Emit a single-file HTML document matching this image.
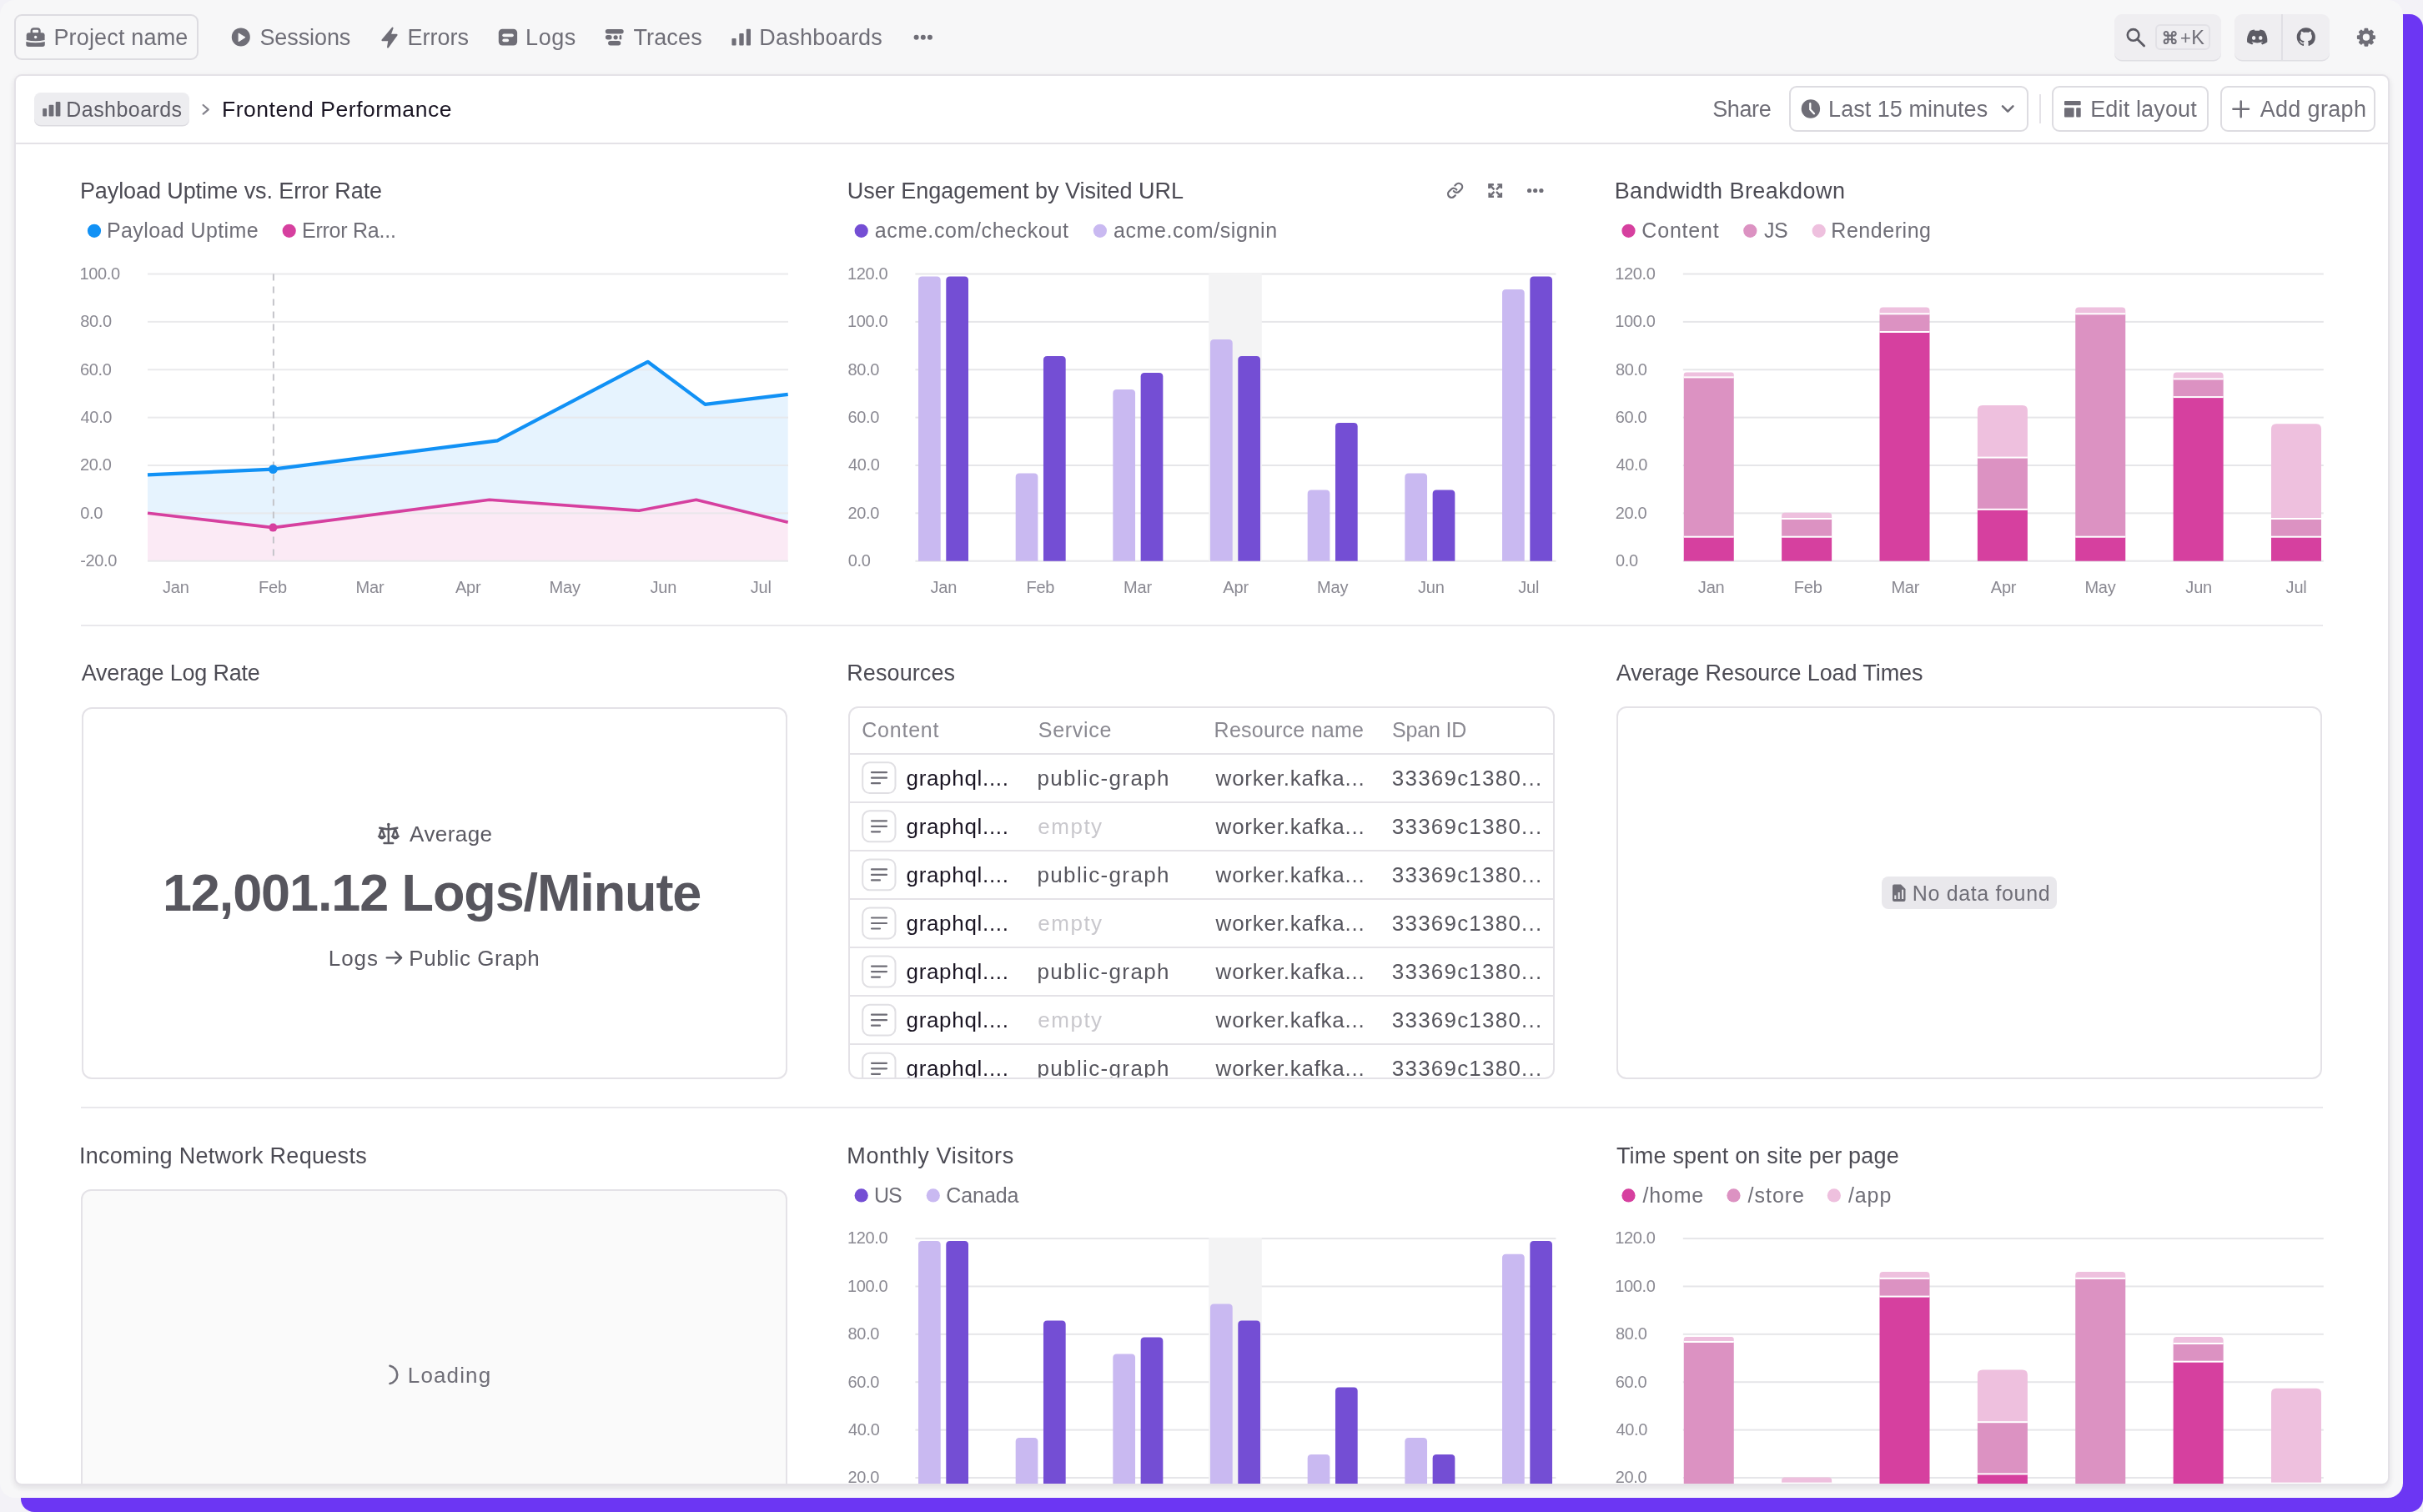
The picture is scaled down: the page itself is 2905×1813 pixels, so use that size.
<!DOCTYPE html>
<html><head><meta charset="utf-8"><title>Frontend Performance</title>
<style>
html,body{margin:0;padding:0}
body{width:2905px;height:1813px;overflow:hidden;position:relative;background:#f3f2f7;font-family:"Liberation Sans",sans-serif}
.t{position:absolute;white-space:nowrap;font-family:"Liberation Sans",sans-serif}
#clip{position:absolute;left:0;top:0;width:2905px;height:1779px;overflow:hidden;will-change:transform}
</style></head><body>
<div style="position:absolute;left:25.00px;top:17.00px;width:2880.00px;height:1796.00px;box-sizing:border-box;background:#6c36f3;border-radius:16px"></div><div style="position:absolute;left:0.00px;top:0.00px;width:2881.00px;height:1796.00px;box-sizing:border-box;background:#f7f7f8;border-radius:18px;overflow:hidden"></div><div style="position:absolute;left:17.30px;top:17.10px;width:221.00px;height:55.30px;box-sizing:border-box;border:2px solid #dddce1;border-radius:9px"></div><div style="position:absolute;left:2535.20px;top:16.70px;width:127.40px;height:55.00px;box-sizing:border-box;background:#efeef1;border-radius:9px;box-shadow:0 1.5px 0 #e0dfe4"></div><div style="position:absolute;left:2583.60px;top:29.30px;width:66.40px;height:30.50px;box-sizing:border-box;border:2px solid #e2e1e6;border-radius:6px"></div><div style="position:absolute;left:2679.00px;top:16.70px;width:113.70px;height:55.00px;box-sizing:border-box;background:#efeef1;border-radius:9px;box-shadow:0 1.5px 0 #e0dfe4"></div><div style="position:absolute;left:2735.00px;top:16.70px;width:2.00px;height:55.00px;box-sizing:border-box;background:#e0dfe4"></div><div style="position:absolute;left:17.30px;top:89.30px;width:2847.70px;height:1691.70px;box-sizing:border-box;background:#fff;border:2px solid #e4e2e7;border-radius:9px;box-shadow:0 4px 6px rgba(40,30,60,0.07),0 1px 10px rgba(40,30,60,0.04)"></div><div style="position:absolute;left:19.00px;top:171.00px;width:2844.00px;height:2.00px;box-sizing:border-box;background:#e4e2e7"></div><div style="position:absolute;left:41.20px;top:111.20px;width:185.60px;height:38.50px;box-sizing:border-box;background:#ededf0;border-radius:8px;box-shadow:0 1.5px 0 #dcdbe0"></div><div style="position:absolute;left:2145.30px;top:103.30px;width:286.70px;height:54.70px;box-sizing:border-box;border:2px solid #dddce1;border-radius:9px"></div><div style="position:absolute;left:2444.80px;top:113.00px;width:2.00px;height:35.20px;box-sizing:border-box;background:#e4e2e7"></div><div style="position:absolute;left:2459.50px;top:103.30px;width:188.70px;height:54.70px;box-sizing:border-box;border:2px solid #dddce1;border-radius:9px"></div><div style="position:absolute;left:2661.50px;top:103.30px;width:186.70px;height:54.70px;box-sizing:border-box;border:2px solid #dddce1;border-radius:9px"></div><div style="position:absolute;left:97.00px;top:749.00px;width:2688.00px;height:2.00px;box-sizing:border-box;background:#e9e8ec"></div><div style="position:absolute;left:97.00px;top:1327.00px;width:2688.00px;height:2.00px;box-sizing:border-box;background:#e9e8ec"></div><div style="position:absolute;left:97.70px;top:847.80px;width:846.30px;height:446.40px;box-sizing:border-box;border:2px solid #e4e2e7;border-radius:12px"></div><div style="position:absolute;left:1017.40px;top:847.20px;width:846.30px;height:446.70px;box-sizing:border-box;border:2px solid #e4e2e7;border-radius:12px"></div><div style="position:absolute;left:1937.80px;top:847.40px;width:845.90px;height:446.50px;box-sizing:border-box;border:2px solid #e4e2e7;border-radius:12px"></div><div style="position:absolute;left:2256.00px;top:1051.40px;width:209.60px;height:38.80px;box-sizing:border-box;background:#e9e8ec;border-radius:8px"></div><div style="position:absolute;left:1019.00px;top:902.60px;width:843.00px;height:2.00px;box-sizing:border-box;background:#e4e2e7"></div><div style="position:absolute;left:1019.00px;top:960.70px;width:843.00px;height:2.00px;box-sizing:border-box;background:#e4e2e7"></div><div style="position:absolute;left:1019.00px;top:1018.80px;width:843.00px;height:2.00px;box-sizing:border-box;background:#e4e2e7"></div><div style="position:absolute;left:1019.00px;top:1076.90px;width:843.00px;height:2.00px;box-sizing:border-box;background:#e4e2e7"></div><div style="position:absolute;left:1019.00px;top:1135.00px;width:843.00px;height:2.00px;box-sizing:border-box;background:#e4e2e7"></div><div style="position:absolute;left:1019.00px;top:1193.10px;width:843.00px;height:2.00px;box-sizing:border-box;background:#e4e2e7"></div><div style="position:absolute;left:1019.00px;top:1251.20px;width:843.00px;height:2.00px;box-sizing:border-box;background:#e4e2e7"></div>
<div id="clip">
<div style="position:absolute;left:97.00px;top:1425.60px;width:847.00px;height:374.40px;box-sizing:border-box;background:#fafafa;border:2px solid #e4e2e7;border-radius:12px"></div>
<svg width="2905" height="1813" viewBox="0 0 2905 1813" style="position:absolute;left:0;top:0"><g transform="translate(31,33.3)" fill="#6f6e77"><rect x="6.8" y="1.2" width="9.6" height="6.5" rx="2.6" fill="none" stroke="#6f6e77" stroke-width="2.6"/><path d="M0.7,9 Q0.7,6 3.7,6 H19.5 Q22.6,6 22.6,9 V14.6 Q11.6,17.2 0.7,14.6 Z"/><path d="M0.3,16.8 Q11.6,19.2 22.8,16.8 V20 Q22.8,22.7 20,22.7 H3.1 Q0.3,22.7 0.3,20 Z"/><circle cx="11.65" cy="11.2" r="1.7" fill="#f7f7f8"/></g><circle cx="288.8" cy="44.4" r="11" fill="#6f6e77"/><path d="M286.2,40.2 L293.6,44.8 L286.2,49.4 Z" fill="#f7f7f8" stroke="#f7f7f8" stroke-width="1.2" stroke-linejoin="round"/><path d="M470.6,33.6 L458.4,48.2 L466.4,48.2 L465,56.6 L475.6,41.8 L467.6,41.8 Z" fill="#6f6e77" stroke="#6f6e77" stroke-width="2" stroke-linejoin="round"/><rect x="597.8" y="34.7" width="22.3" height="19.9" rx="4.5" fill="#6f6e77"/><rect x="602.3" y="40.4" width="13.5" height="3.8" rx="1.9" fill="#f7f7f8"/><rect x="602.3" y="46.6" width="7.8" height="3.6" rx="1.8" fill="#f7f7f8"/><g fill="#6f6e77"><rect x="725.8" y="35" width="21.9" height="5.4" rx="2.7"/><rect x="725.9" y="42.1" width="7.7" height="5.4" rx="2.7"/><circle cx="738.1" cy="44.8" r="2.6"/><rect x="742.6" y="42.1" width="2.6" height="5.4" rx="1.3"/><rect x="729.1" y="49.1" width="15.1" height="5.5" rx="2.75"/></g><g fill="#6f6e77"><rect x="877.4" y="46" width="5.2" height="8.6" rx="1"/><rect x="886.3" y="40" width="5.4" height="14.6" rx="1"/><rect x="894.8" y="34.7" width="5.2" height="19.9" rx="1"/></g><g fill="#6f6e77"><circle cx="1098.6" cy="44.7" r="3"/><circle cx="1106.8" cy="44.7" r="3"/><circle cx="1114.9" cy="44.7" r="3"/></g><circle cx="2557.6" cy="41.9" r="6.8" fill="none" stroke="#5c5b64" stroke-width="2.6"/><path d="M2562.6,47 L2570.6,55" stroke="#5c5b64" stroke-width="2.8" stroke-linecap="round"/><g transform="translate(2592.3,35.6) scale(0.78)"><path d="M15 6v12a3 3 0 1 0 3-3H6a3 3 0 1 0 3 3V6a3 3 0 1 0-3 3h12a3 3 0 1 0-3-3" fill="none" stroke="#6f6e77" stroke-width="2.6" stroke-linecap="round" stroke-linejoin="round"/></g><g transform="translate(2694,35.6) scale(0.1919,0.1847)"><path fill="#5c5b64" d="M107.7,8.07A105.15,105.15,0,0,0,81.47,0a72.06,72.06,0,0,0-3.36,6.83A97.68,97.68,0,0,0,49,6.83,72.37,72.37,0,0,0,45.64,0,105.89,105.89,0,0,0,19.39,8.09C2.79,32.650-1.71,56.6.54,80.21h0A105.730,105.730,0,0,0,32.71,96.36,77.7,77.7,0,0,0,39.6,85.25a68.42,68.42,0,0,1-10.85-5.18c.91-.66,1.8-1.34,2.66-2a75.57,75.57,0,0,0,64.32,0c.87.71,1.76,1.39,2.66,2a68.68,68.68,0,0,1-10.87,5.19,77,77,0,0,0,6.89,11.1A105.25,105.25,0,0,0,126.6,80.22h0C129.24,52.84,122.09,29.11,107.7,8.07ZM42.45,65.69C36.18,65.69,31,60,31,53s5-12.74,11.43-12.74S54,46,53.89,53,48.840,65.69,42.45,65.69Zm42.24,0C78.41,65.69,73.25,60,73.25,53s5-12.74,11.44-12.74S96.23,46,96.12,53,91.08,65.690,84.69,65.69Z"/></g><g transform="translate(2753.7,33.3) scale(1.3875)"><path fill="#5c5b64" d="M8 0C3.58 0 0 3.58 0 8c0 3.54 2.29 6.53 5.47 7.59.4.07.55-.17.55-.38 0-.19-.01-.82-.01-1.49-2.01.37-2.53-.49-2.690-.94-.09-.23-.48-.94-.82-1.13-.28-.15-.68-.52-.01-.53.63-.01 1.08.58 1.23.82.72 1.21 1.87.87 2.33.66.07-.52.28-.87.51-1.07-1.78-.2-3.64-.89-3.64-3.95 0-.87.31-1.59.82-2.15-.08-.2-.36-1.02.08-2.12 0 0 .67-.21 2.2.82.64-.18 1.32-.27 2-.27.68 0 1.36.09 2 .27 1.53-1.04 2.2-.82 2.2-.82.44 1.1.16 1.92.08 2.12.51.56.82 1.27.82 2.15 0 3.07-1.87 3.75-3.65 3.95.29.25.54.73.54 1.48 0 1.07-.01 1.93-.01 2.2 0 .21.15.46.55.38A8.013 8.013 0 0016 8c0-4.42-3.58-8-8-8z"/></g><path d="M2835.34,37.21 L2835.58,34.74 L2838.22,34.74 L2838.46,37.21 L2841.06,38.29 L2842.98,36.71 L2844.84,38.57 L2843.26,40.49 L2844.34,43.09 L2846.81,43.33 L2846.81,45.97 L2844.34,46.21 L2843.26,48.81 L2844.84,50.73 L2842.98,52.59 L2841.06,51.01 L2838.46,52.09 L2838.22,54.56 L2835.58,54.56 L2835.34,52.09 L2832.74,51.01 L2830.82,52.59 L2828.96,50.73 L2830.54,48.81 L2829.46,46.21 L2826.99,45.97 L2826.99,43.33 L2829.46,43.09 L2830.54,40.49 L2828.96,38.57 L2830.82,36.71 L2832.74,38.29 Z" fill="#6f6e77" stroke="#6f6e77" stroke-width="2.2" stroke-linejoin="round"/><circle cx="2836.9" cy="44.65" r="4.1" fill="#f7f7f8"/><g fill="#6f6e77"><rect x="51.2" y="130.1" width="4.9" height="9.4" rx="1"/><rect x="58.6" y="125.7" width="5.8" height="13.8" rx="1"/><rect x="66.7" y="121.9" width="5.7" height="17.6" rx="1"/></g><path d="M243.6,126 L249.8,131.3 L243.6,136.6" fill="none" stroke="#85848d" stroke-width="2.2" stroke-linecap="round" stroke-linejoin="round"/><circle cx="2170.9" cy="130.5" r="11.2" fill="#6f6e77"/><path d="M2170.3,124.2 V131.3 L2175,136.2" fill="none" stroke="#fff" stroke-width="2.3" stroke-linecap="round" stroke-linejoin="round"/><path d="M2401,127.4 L2407.2,133.6 L2413.4,127.4" fill="none" stroke="#6f6e77" stroke-width="2.6" stroke-linecap="round" stroke-linejoin="round"/><g fill="#6f6e77"><rect x="2475" y="121" width="19.7" height="5.3" rx="1"/><rect x="2475" y="129.3" width="11.6" height="11.3" rx="1"/><rect x="2489.2" y="129.3" width="5.5" height="11.3" rx="1"/></g><path d="M2686.7,121.5 V140.2 M2677.4,130.85 H2696" stroke="#6f6e77" stroke-width="2.5" stroke-linecap="round"/><g transform="translate(1734.3,218) scale(0.86)" fill="none" stroke="#6f6e77" stroke-width="2.6" stroke-linecap="round" stroke-linejoin="round"><path d="M10 13a5 5 0 0 0 7.54.54l3-3a5 5 0 0 0-7.07-7.07l-1.72 1.71"/><path d="M14 11a5 5 0 0 0-7.54-.54l-3 3a5 5 0 0 0 7.07 7.07l1.71-1.71"/></g><g stroke="#6f6e77" stroke-width="2.4" fill="none" stroke-linecap="butt"><path d="M1785.6,226 V221.4 H1790.2 M1801.1-0"/><path d="M1785.6,226 V221.4 H1791"/><path d="M1799.9,226 V221.4 H1795.3"/><path d="M1785.6,231.1 V235.7 H1791"/><path d="M1799.9,231.1 V235.7 H1795.3"/><path d="M1786.5,222.3 L1791.5,227.3 M1799,222.3 L1794,227.3 M1786.5,234.8 L1791.5,229.8 M1799,234.8 L1794,229.8"/></g><g fill="#6f6e77"><circle cx="1833.6" cy="228.5" r="2.6"/><circle cx="1840.7" cy="228.5" r="2.6"/><circle cx="1847.9" cy="228.5" r="2.6"/></g><circle cx="113" cy="276.80" r="8.1" fill="#1191f5"/><circle cx="346.7" cy="276.80" r="8.1" fill="#d6409f"/><circle cx="1032.7" cy="276.80" r="8.1" fill="#744ed4"/><circle cx="1318.9" cy="276.80" r="8.1" fill="#c9b9f1"/><circle cx="1952.5" cy="276.80" r="8.1" fill="#d6409f"/><circle cx="2098.3" cy="276.80" r="8.1" fill="#dc92c2"/><circle cx="2180.7" cy="276.80" r="8.1" fill="#eec0de"/><circle cx="1032.7" cy="1433.40" r="8.1" fill="#744ed4"/><circle cx="1118.8" cy="1433.40" r="8.1" fill="#c9b9f1"/><circle cx="1952.5" cy="1433.40" r="8.1" fill="#d6409f"/><circle cx="2078.5" cy="1433.40" r="8.1" fill="#dc92c2"/><circle cx="2198.9" cy="1433.40" r="8.1" fill="#eec0de"/><polygon points="177,569.3 327.4,562.6 596.3,528.3 776.6,433.8 845.4,484.9 944.7,472.8 944.7,626.2 834.7,599.3 766.2,612.3 586.8,599.3 327.4,632.6 177,615.2" fill="#e6f3fe"/><polygon points="177,615.2 327.4,632.6 586.8,599.3 766.2,612.3 834.7,599.3 944.7,626.2 944.7,672.72 177,672.72" fill="#fbeaf5"/><rect x="177" y="327.50" width="768" height="2" fill="#e6e6e9" opacity="0.85"/><rect x="177" y="384.87" width="768" height="2" fill="#e6e6e9" opacity="0.85"/><rect x="177" y="442.24" width="768" height="2" fill="#e6e6e9" opacity="0.85"/><rect x="177" y="499.61" width="768" height="2" fill="#e6e6e9" opacity="0.85"/><rect x="177" y="556.98" width="768" height="2" fill="#e6e6e9" opacity="0.85"/><rect x="177" y="614.35" width="768" height="2" fill="#e6e6e9" opacity="0.85"/><rect x="177" y="671.72" width="768" height="2" fill="#e6e6e9" opacity="0.85"/><line x1="327.9" y1="328.5" x2="327.9" y2="672.72" stroke="#c5c5ca" stroke-width="2" stroke-dasharray="8 7"/><polyline points="177,569.3 327.4,562.6 596.3,528.3 776.6,433.8 845.4,484.9 944.7,472.8" fill="none" stroke="#1191f5" stroke-width="4.2" stroke-linejoin="round"/><polyline points="177,615.2 327.4,632.6 586.8,599.3 766.2,612.3 834.7,599.3 944.7,626.2" fill="none" stroke="#d6409f" stroke-width="3.6" stroke-linejoin="round"/><circle cx="327.4" cy="562.6" r="5.4" fill="#1191f5"/><circle cx="327.4" cy="632.6" r="5" fill="#d6409f"/><rect x="1097.4" y="327.50" width="768" height="2" fill="#e6e6e9"/><rect x="1097.4" y="384.87" width="768" height="2" fill="#e6e6e9"/><rect x="1097.4" y="442.24" width="768" height="2" fill="#e6e6e9"/><rect x="1097.4" y="499.61" width="768" height="2" fill="#e6e6e9"/><rect x="1097.4" y="556.98" width="768" height="2" fill="#e6e6e9"/><rect x="1097.4" y="614.35" width="768" height="2" fill="#e6e6e9"/><rect x="1097.4" y="671.72" width="768" height="2" fill="#e6e6e9"/><rect x="1449.3" y="327.50" width="63.5" height="345.22" fill="#f3f3f4"/><path d="M1101.00,672.72 V336.00 Q1101.00,331.50 1105.50,331.50 H1123.20 Q1127.70,331.50 1127.70,336.00 V672.72 Z" fill="#c9b9f1"/><path d="M1134.30,672.72 V336.00 Q1134.30,331.50 1138.80,331.50 H1156.50 Q1161.00,331.50 1161.00,336.00 V672.72 Z" fill="#744ed4"/><path d="M1217.67,672.72 V572.00 Q1217.67,567.50 1222.17,567.50 H1239.87 Q1244.37,567.50 1244.37,572.00 V672.72 Z" fill="#c9b9f1"/><path d="M1250.97,672.72 V431.50 Q1250.97,427.00 1255.47,427.00 H1273.17 Q1277.67,427.00 1277.67,431.50 V672.72 Z" fill="#744ed4"/><path d="M1334.34,672.72 V471.50 Q1334.34,467.00 1338.84,467.00 H1356.54 Q1361.04,467.00 1361.04,471.50 V672.72 Z" fill="#c9b9f1"/><path d="M1367.64,672.72 V451.50 Q1367.64,447.00 1372.14,447.00 H1389.84 Q1394.34,447.00 1394.34,451.50 V672.72 Z" fill="#744ed4"/><path d="M1451.01,672.72 V411.50 Q1451.01,407.00 1455.51,407.00 H1473.21 Q1477.71,407.00 1477.71,411.50 V672.72 Z" fill="#c9b9f1"/><path d="M1484.31,672.72 V431.50 Q1484.31,427.00 1488.81,427.00 H1506.51 Q1511.01,427.00 1511.01,431.50 V672.72 Z" fill="#744ed4"/><path d="M1567.68,672.72 V592.00 Q1567.68,587.50 1572.18,587.50 H1589.88 Q1594.38,587.50 1594.38,592.00 V672.72 Z" fill="#c9b9f1"/><path d="M1600.98,672.72 V511.40 Q1600.98,506.90 1605.48,506.90 H1623.18 Q1627.68,506.90 1627.68,511.40 V672.72 Z" fill="#744ed4"/><path d="M1684.35,672.72 V572.00 Q1684.35,567.50 1688.85,567.50 H1706.55 Q1711.05,567.50 1711.05,572.00 V672.72 Z" fill="#c9b9f1"/><path d="M1717.65,672.72 V592.00 Q1717.65,587.50 1722.15,587.50 H1739.85 Q1744.35,587.50 1744.35,592.00 V672.72 Z" fill="#744ed4"/><path d="M1801.02,672.72 V351.60 Q1801.02,347.10 1805.52,347.10 H1823.22 Q1827.72,347.10 1827.72,351.60 V672.72 Z" fill="#c9b9f1"/><path d="M1834.32,672.72 V336.00 Q1834.32,331.50 1838.82,331.50 H1856.52 Q1861.02,331.50 1861.02,336.00 V672.72 Z" fill="#744ed4"/><rect x="2017.8" y="327.50" width="768" height="2" fill="#e6e6e9"/><rect x="2017.8" y="384.87" width="768" height="2" fill="#e6e6e9"/><rect x="2017.8" y="442.24" width="768" height="2" fill="#e6e6e9"/><rect x="2017.8" y="499.61" width="768" height="2" fill="#e6e6e9"/><rect x="2017.8" y="556.98" width="768" height="2" fill="#e6e6e9"/><rect x="2017.8" y="614.35" width="768" height="2" fill="#e6e6e9"/><rect x="2017.8" y="671.72" width="768" height="2" fill="#e6e6e9"/><path d="M2018.75,452.40 V449.40 Q2018.75,446.40 2021.75,446.40 H2075.75 Q2078.75,446.40 2078.75,449.40 V452.40 Z" fill="#eec0de"/><rect x="2018.75" y="452.40" width="60" height="191.30" fill="#dc92c2"/><rect x="2018.75" y="643.70" width="60" height="29.02" fill="#d6409f"/><rect x="2018.75" y="451.40" width="60" height="2" fill="#fff"/><rect x="2018.75" y="642.70" width="60" height="2" fill="#fff"/><path d="M2136.12,622.00 V618.40 Q2136.12,614.80 2139.72,614.80 H2192.53 Q2196.12,614.80 2196.12,618.40 V622.00 Z" fill="#eec0de"/><rect x="2136.12" y="622.00" width="60" height="21.70" fill="#dc92c2"/><rect x="2136.12" y="643.70" width="60" height="29.02" fill="#d6409f"/><rect x="2136.12" y="621.00" width="60" height="2" fill="#fff"/><rect x="2136.12" y="642.70" width="60" height="2" fill="#fff"/><path d="M2253.50,376.30 V372.35 Q2253.50,368.40 2257.45,368.40 H2309.55 Q2313.50,368.40 2313.50,372.35 V376.30 Z" fill="#eec0de"/><rect x="2253.50" y="376.30" width="60" height="21.70" fill="#dc92c2"/><rect x="2253.50" y="398.00" width="60" height="274.72" fill="#d6409f"/><rect x="2253.50" y="375.30" width="60" height="2" fill="#fff"/><rect x="2253.50" y="397.00" width="60" height="2" fill="#fff"/><path d="M2370.88,548.60 V492.00 Q2370.88,486.00 2376.88,486.00 H2424.88 Q2430.88,486.00 2430.88,492.00 V548.60 Z" fill="#eec0de"/><rect x="2370.88" y="548.60" width="60" height="62.20" fill="#dc92c2"/><rect x="2370.88" y="610.80" width="60" height="61.92" fill="#d6409f"/><rect x="2370.88" y="547.60" width="60" height="2" fill="#fff"/><rect x="2370.88" y="609.80" width="60" height="2" fill="#fff"/><path d="M2488.25,376.30 V372.35 Q2488.25,368.40 2492.20,368.40 H2544.30 Q2548.25,368.40 2548.25,372.35 V376.30 Z" fill="#eec0de"/><rect x="2488.25" y="376.30" width="60" height="267.40" fill="#dc92c2"/><rect x="2488.25" y="643.70" width="60" height="29.02" fill="#d6409f"/><rect x="2488.25" y="375.30" width="60" height="2" fill="#fff"/><rect x="2488.25" y="642.70" width="60" height="2" fill="#fff"/><path d="M2605.62,454.40 V450.40 Q2605.62,446.40 2609.62,446.40 H2661.62 Q2665.62,446.40 2665.62,450.40 V454.40 Z" fill="#eec0de"/><rect x="2605.62" y="454.40" width="60" height="21.70" fill="#dc92c2"/><rect x="2605.62" y="476.10" width="60" height="196.62" fill="#d6409f"/><rect x="2605.62" y="453.40" width="60" height="2" fill="#fff"/><rect x="2605.62" y="475.10" width="60" height="2" fill="#fff"/><path d="M2723.00,622.00 V514.20 Q2723.00,508.20 2729.00,508.20 H2777.00 Q2783.00,508.20 2783.00,514.20 V622.00 Z" fill="#eec0de"/><rect x="2723.00" y="622.00" width="60" height="21.70" fill="#dc92c2"/><rect x="2723.00" y="643.70" width="60" height="29.02" fill="#d6409f"/><rect x="2723.00" y="621.00" width="60" height="2" fill="#fff"/><rect x="2723.00" y="642.70" width="60" height="2" fill="#fff"/><rect x="1097.4" y="1484.10" width="768" height="2" fill="#e6e6e9"/><rect x="1097.4" y="1541.47" width="768" height="2" fill="#e6e6e9"/><rect x="1097.4" y="1598.84" width="768" height="2" fill="#e6e6e9"/><rect x="1097.4" y="1656.21" width="768" height="2" fill="#e6e6e9"/><rect x="1097.4" y="1713.58" width="768" height="2" fill="#e6e6e9"/><rect x="1097.4" y="1770.95" width="768" height="2" fill="#e6e6e9"/><rect x="1097.4" y="1828.32" width="768" height="2" fill="#e6e6e9"/><rect x="1449.3" y="1484.10" width="63.5" height="345.22" fill="#f3f3f4"/><path d="M1101.00,1829.32 V1492.60 Q1101.00,1488.10 1105.50,1488.10 H1123.20 Q1127.70,1488.10 1127.70,1492.60 V1829.32 Z" fill="#c9b9f1"/><path d="M1134.30,1829.32 V1492.60 Q1134.30,1488.10 1138.80,1488.10 H1156.50 Q1161.00,1488.10 1161.00,1492.60 V1829.32 Z" fill="#744ed4"/><path d="M1217.67,1829.32 V1728.60 Q1217.67,1724.10 1222.17,1724.10 H1239.87 Q1244.37,1724.10 1244.37,1728.60 V1829.32 Z" fill="#c9b9f1"/><path d="M1250.97,1829.32 V1588.10 Q1250.97,1583.60 1255.47,1583.60 H1273.17 Q1277.67,1583.60 1277.67,1588.10 V1829.32 Z" fill="#744ed4"/><path d="M1334.34,1829.32 V1628.10 Q1334.34,1623.60 1338.84,1623.60 H1356.54 Q1361.04,1623.60 1361.04,1628.10 V1829.32 Z" fill="#c9b9f1"/><path d="M1367.64,1829.32 V1608.10 Q1367.64,1603.60 1372.14,1603.60 H1389.84 Q1394.34,1603.60 1394.34,1608.10 V1829.32 Z" fill="#744ed4"/><path d="M1451.01,1829.32 V1568.10 Q1451.01,1563.60 1455.51,1563.60 H1473.21 Q1477.71,1563.60 1477.71,1568.10 V1829.32 Z" fill="#c9b9f1"/><path d="M1484.31,1829.32 V1588.10 Q1484.31,1583.60 1488.81,1583.60 H1506.51 Q1511.01,1583.60 1511.01,1588.10 V1829.32 Z" fill="#744ed4"/><path d="M1567.68,1829.32 V1748.60 Q1567.68,1744.10 1572.18,1744.10 H1589.88 Q1594.38,1744.10 1594.38,1748.60 V1829.32 Z" fill="#c9b9f1"/><path d="M1600.98,1829.32 V1668.00 Q1600.98,1663.50 1605.48,1663.50 H1623.18 Q1627.68,1663.50 1627.68,1668.00 V1829.32 Z" fill="#744ed4"/><path d="M1684.35,1829.32 V1728.60 Q1684.35,1724.10 1688.85,1724.10 H1706.55 Q1711.05,1724.10 1711.05,1728.60 V1829.32 Z" fill="#c9b9f1"/><path d="M1717.65,1829.32 V1748.60 Q1717.65,1744.10 1722.15,1744.10 H1739.85 Q1744.35,1744.10 1744.35,1748.60 V1829.32 Z" fill="#744ed4"/><path d="M1801.02,1829.32 V1508.20 Q1801.02,1503.70 1805.52,1503.70 H1823.22 Q1827.72,1503.70 1827.72,1508.20 V1829.32 Z" fill="#c9b9f1"/><path d="M1834.32,1829.32 V1492.60 Q1834.32,1488.10 1838.82,1488.10 H1856.52 Q1861.02,1488.10 1861.02,1492.60 V1829.32 Z" fill="#744ed4"/><rect x="2017.8" y="1484.10" width="768" height="2" fill="#e6e6e9"/><rect x="2017.8" y="1541.47" width="768" height="2" fill="#e6e6e9"/><rect x="2017.8" y="1598.84" width="768" height="2" fill="#e6e6e9"/><rect x="2017.8" y="1656.21" width="768" height="2" fill="#e6e6e9"/><rect x="2017.8" y="1713.58" width="768" height="2" fill="#e6e6e9"/><rect x="2017.8" y="1770.95" width="768" height="2" fill="#e6e6e9"/><rect x="2017.8" y="1828.32" width="768" height="2" fill="#e6e6e9"/><path d="M2018.75,1609.00 V1606.00 Q2018.75,1603.00 2021.75,1603.00 H2075.75 Q2078.75,1603.00 2078.75,1606.00 V1609.00 Z" fill="#eec0de"/><rect x="2018.75" y="1609.00" width="60" height="191.30" fill="#dc92c2"/><rect x="2018.75" y="1800.30" width="60" height="1185.62" fill="#d6409f"/><rect x="2018.75" y="1608.00" width="60" height="2" fill="#fff"/><rect x="2018.75" y="1799.30" width="60" height="2" fill="#fff"/><path d="M2136.12,1778.60 V1775.00 Q2136.12,1771.40 2139.72,1771.40 H2192.53 Q2196.12,1771.40 2196.12,1775.00 V1778.60 Z" fill="#eec0de"/><rect x="2136.12" y="1778.60" width="60" height="21.70" fill="#dc92c2"/><rect x="2136.12" y="1800.30" width="60" height="1185.62" fill="#d6409f"/><rect x="2136.12" y="1777.60" width="60" height="2" fill="#fff"/><rect x="2136.12" y="1799.30" width="60" height="2" fill="#fff"/><path d="M2253.50,1532.90 V1528.95 Q2253.50,1525.00 2257.45,1525.00 H2309.55 Q2313.50,1525.00 2313.50,1528.95 V1532.90 Z" fill="#eec0de"/><rect x="2253.50" y="1532.90" width="60" height="21.70" fill="#dc92c2"/><rect x="2253.50" y="1554.60" width="60" height="1431.32" fill="#d6409f"/><rect x="2253.50" y="1531.90" width="60" height="2" fill="#fff"/><rect x="2253.50" y="1553.60" width="60" height="2" fill="#fff"/><path d="M2370.88,1705.20 V1648.60 Q2370.88,1642.60 2376.88,1642.60 H2424.88 Q2430.88,1642.60 2430.88,1648.60 V1705.20 Z" fill="#eec0de"/><rect x="2370.88" y="1705.20" width="60" height="62.20" fill="#dc92c2"/><rect x="2370.88" y="1767.40" width="60" height="1218.52" fill="#d6409f"/><rect x="2370.88" y="1704.20" width="60" height="2" fill="#fff"/><rect x="2370.88" y="1766.40" width="60" height="2" fill="#fff"/><path d="M2488.25,1532.90 V1528.95 Q2488.25,1525.00 2492.20,1525.00 H2544.30 Q2548.25,1525.00 2548.25,1528.95 V1532.90 Z" fill="#eec0de"/><rect x="2488.25" y="1532.90" width="60" height="267.40" fill="#dc92c2"/><rect x="2488.25" y="1800.30" width="60" height="1185.62" fill="#d6409f"/><rect x="2488.25" y="1531.90" width="60" height="2" fill="#fff"/><rect x="2488.25" y="1799.30" width="60" height="2" fill="#fff"/><path d="M2605.62,1611.00 V1607.00 Q2605.62,1603.00 2609.62,1603.00 H2661.62 Q2665.62,1603.00 2665.62,1607.00 V1611.00 Z" fill="#eec0de"/><rect x="2605.62" y="1611.00" width="60" height="21.70" fill="#dc92c2"/><rect x="2605.62" y="1632.70" width="60" height="1353.22" fill="#d6409f"/><rect x="2605.62" y="1610.00" width="60" height="2" fill="#fff"/><rect x="2605.62" y="1631.70" width="60" height="2" fill="#fff"/><path d="M2723.00,1778.60 V1670.80 Q2723.00,1664.80 2729.00,1664.80 H2777.00 Q2783.00,1664.80 2783.00,1670.80 V1778.60 Z" fill="#eec0de"/><rect x="2723.00" y="1778.60" width="60" height="21.70" fill="#dc92c2"/><rect x="2723.00" y="1800.30" width="60" height="1185.62" fill="#d6409f"/><rect x="2723.00" y="1777.60" width="60" height="2" fill="#fff"/><rect x="2723.00" y="1799.30" width="60" height="2" fill="#fff"/><g stroke="#5a5962" fill="none" stroke-width="2.4" stroke-linecap="round" stroke-linejoin="round"><path d="M465.8,988.5 V1010.5 M460.5,1011 H471.2 M455.2,992.8 L465.8,994.5 L476.3,992.8 M457.8,993.5 L454.6,1003.2 M457.8,993.5 L461.2,1003.2 M473.8,993.5 L470.6,1003.2 M473.8,993.5 L477.2,1003.2"/></g><path d="M454,1003 H461.8 Q457.9,1008.4 454,1003 Z M470,1003 H477.8 Q473.9,1008.4 470,1003 Z" fill="#5a5962" stroke="#5a5962" stroke-width="1.5"/><circle cx="465.8" cy="988.6" r="1.8" fill="#5a5962"/><path d="M463.6,1148.4 H481 M474.2,1141.4 L481.2,1148.4 L474.2,1155.4" fill="none" stroke="#5a5962" stroke-width="2.2" stroke-linecap="round" stroke-linejoin="round"/><path d="M2269,1062.5 Q2269,1060.5 2271,1060.5 H2279 L2284.5,1066 V1079 Q2284.5,1081 2282.5,1081 H2271 Q2269,1081 2269,1079 Z" fill="#6f6e77"/><path d="M2272.3,1078 V1073.5 M2276.7,1078 V1070 M2281.1,1078 V1066.8" stroke="#e9e8ec" stroke-width="2.1"/><path d="M467.5,1637.8 A10.8,10.8 0 0 1 467.5,1659" fill="none" stroke="#6f6e77" stroke-width="2.6" stroke-linecap="round"/></svg>
<span class="t" style="left:64.39px;top:32.00px;font-size:27px;line-height:27px;color:#6f6e77;font-weight:400;letter-spacing:0.175px">Project name</span><span class="t" style="left:311.46px;top:32.00px;font-size:27px;line-height:27px;color:#6f6e77;font-weight:400;letter-spacing:-0.095px">Sessions</span><span class="t" style="left:488.59px;top:32.00px;font-size:27px;line-height:27px;color:#6f6e77;font-weight:400;letter-spacing:-0.009px">Errors</span><span class="t" style="left:630.09px;top:32.00px;font-size:27px;line-height:27px;color:#6f6e77;font-weight:400;letter-spacing:0.535px">Logs</span><span class="t" style="left:759.38px;top:32.00px;font-size:27px;line-height:27px;color:#6f6e77;font-weight:400;letter-spacing:0.150px">Traces</span><span class="t" style="left:910.19px;top:32.00px;font-size:27px;line-height:27px;color:#6f6e77;font-weight:400;letter-spacing:0.230px">Dashboards</span><span class="t" style="left:2613.90px;top:35.00px;font-size:22px;line-height:22px;color:#6f6e77;font-weight:400;letter-spacing:0.000px">+</span><span class="t" style="left:2627.30px;top:34.00px;font-size:23.5px;line-height:23.5px;color:#6f6e77;font-weight:400;letter-spacing:-1.800px">K</span><span class="t" style="left:79.30px;top:119.00px;font-size:25px;line-height:25px;color:#5e5d66;font-weight:400;letter-spacing:0.444px">Dashboards</span><span class="t" style="left:265.93px;top:118.00px;font-size:26.5px;line-height:26.5px;color:#1a1523;font-weight:400;letter-spacing:0.548px">Frontend Performance</span><span class="t" style="left:2053.16px;top:118.00px;font-size:27px;line-height:27px;color:#6f6e77;font-weight:400;letter-spacing:-0.378px">Share</span><span class="t" style="left:2192.09px;top:118.00px;font-size:27px;line-height:27px;color:#6f6e77;font-weight:400;letter-spacing:0.032px">Last 15 minutes</span><span class="t" style="left:2506.19px;top:118.00px;font-size:27px;line-height:27px;color:#6f6e77;font-weight:400;letter-spacing:0.144px">Edit layout</span><span class="t" style="left:2709.70px;top:118.00px;font-size:27px;line-height:27px;color:#6f6e77;font-weight:400;letter-spacing:0.327px">Add graph</span><span class="t" style="left:95.89px;top:216.00px;font-size:27px;line-height:27px;color:#4c4b54;font-weight:400;letter-spacing:-0.087px">Payload Uptime vs. Error Rate</span><span class="t" style="left:1015.71px;top:216.00px;font-size:27px;line-height:27px;color:#4c4b54;font-weight:400;letter-spacing:0.005px">User Engagement by Visited URL</span><span class="t" style="left:1935.69px;top:216.00px;font-size:27px;line-height:27px;color:#4c4b54;font-weight:400;letter-spacing:0.420px">Bandwidth Breakdown</span><span class="t" style="left:97.70px;top:794.00px;font-size:27px;line-height:27px;color:#4c4b54;font-weight:400;letter-spacing:-0.198px">Average Log Rate</span><span class="t" style="left:1015.29px;top:794.00px;font-size:27px;line-height:27px;color:#4c4b54;font-weight:400;letter-spacing:0.087px">Resources</span><span class="t" style="left:1937.80px;top:794.00px;font-size:27px;line-height:27px;color:#4c4b54;font-weight:400;letter-spacing:-0.098px">Average Resource Load Times</span><span class="t" style="left:94.89px;top:1373.00px;font-size:27px;line-height:27px;color:#4c4b54;font-weight:400;letter-spacing:0.300px">Incoming Network Requests</span><span class="t" style="left:1015.29px;top:1373.00px;font-size:27px;line-height:27px;color:#4c4b54;font-weight:400;letter-spacing:0.652px">Monthly Visitors</span><span class="t" style="left:1937.88px;top:1373.00px;font-size:27px;line-height:27px;color:#4c4b54;font-weight:400;letter-spacing:0.201px">Time spent on site per page</span><span class="t" style="left:128.00px;top:264.00px;font-size:25px;line-height:25px;color:#6f6e77;font-weight:400;letter-spacing:0.394px">Payload Uptime</span><span class="t" style="left:362.00px;top:264.00px;font-size:25px;line-height:25px;color:#6f6e77;font-weight:400;letter-spacing:-0.245px">Error Ra...</span><span class="t" style="left:1048.80px;top:264.00px;font-size:25px;line-height:25px;color:#6f6e77;font-weight:400;letter-spacing:0.608px">acme.com/checkout</span><span class="t" style="left:1335.00px;top:264.00px;font-size:25px;line-height:25px;color:#6f6e77;font-weight:400;letter-spacing:0.609px">acme.com/signin</span><span class="t" style="left:1968.30px;top:264.00px;font-size:25px;line-height:25px;color:#6f6e77;font-weight:400;letter-spacing:0.814px">Content</span><span class="t" style="left:2115.00px;top:264.00px;font-size:25px;line-height:25px;color:#6f6e77;font-weight:400;letter-spacing:-0.400px">JS</span><span class="t" style="left:2195.30px;top:264.00px;font-size:25px;line-height:25px;color:#6f6e77;font-weight:400;letter-spacing:0.543px">Rendering</span><span class="t" style="left:1047.90px;top:1421.00px;font-size:25px;line-height:25px;color:#6f6e77;font-weight:400;letter-spacing:-0.954px">US</span><span class="t" style="left:1134.30px;top:1421.00px;font-size:25px;line-height:25px;color:#6f6e77;font-weight:400;letter-spacing:-0.094px">Canada</span><span class="t" style="left:1969.60px;top:1421.00px;font-size:25px;line-height:25px;color:#6f6e77;font-weight:400;letter-spacing:0.780px">/home</span><span class="t" style="left:2095.60px;top:1421.00px;font-size:25px;line-height:25px;color:#6f6e77;font-weight:400;letter-spacing:0.976px">/store</span><span class="t" style="left:2216.00px;top:1421.00px;font-size:25px;line-height:25px;color:#6f6e77;font-weight:400;letter-spacing:0.882px">/app</span><span class="t" style="left:95.50px;top:318.00px;font-size:20px;line-height:20px;color:#8a8992;font-weight:400;letter-spacing:-0.350px">100.0</span><span class="t" style="left:96.20px;top:375.00px;font-size:20px;line-height:20px;color:#8a8992;font-weight:400;letter-spacing:-0.350px">80.0</span><span class="t" style="left:96.00px;top:433.00px;font-size:20px;line-height:20px;color:#8a8992;font-weight:400;letter-spacing:-0.350px">60.0</span><span class="t" style="left:96.60px;top:490.00px;font-size:20px;line-height:20px;color:#8a8992;font-weight:400;letter-spacing:-0.350px">40.0</span><span class="t" style="left:96.00px;top:547.00px;font-size:20px;line-height:20px;color:#8a8992;font-weight:400;letter-spacing:-0.350px">20.0</span><span class="t" style="left:96.30px;top:605.00px;font-size:20px;line-height:20px;color:#8a8992;font-weight:400;letter-spacing:-0.350px">0.0</span><span class="t" style="left:96.20px;top:662.00px;font-size:20px;line-height:20px;color:#8a8992;font-weight:400;letter-spacing:-0.350px">-20.0</span><span class="t" style="left:1015.90px;top:318.00px;font-size:20px;line-height:20px;color:#8a8992;font-weight:400;letter-spacing:-0.350px">120.0</span><span class="t" style="left:1015.90px;top:375.00px;font-size:20px;line-height:20px;color:#8a8992;font-weight:400;letter-spacing:-0.350px">100.0</span><span class="t" style="left:1016.60px;top:433.00px;font-size:20px;line-height:20px;color:#8a8992;font-weight:400;letter-spacing:-0.350px">80.0</span><span class="t" style="left:1016.40px;top:490.00px;font-size:20px;line-height:20px;color:#8a8992;font-weight:400;letter-spacing:-0.350px">60.0</span><span class="t" style="left:1017.00px;top:547.00px;font-size:20px;line-height:20px;color:#8a8992;font-weight:400;letter-spacing:-0.350px">40.0</span><span class="t" style="left:1016.40px;top:605.00px;font-size:20px;line-height:20px;color:#8a8992;font-weight:400;letter-spacing:-0.350px">20.0</span><span class="t" style="left:1016.70px;top:662.00px;font-size:20px;line-height:20px;color:#8a8992;font-weight:400;letter-spacing:-0.350px">0.0</span><span class="t" style="left:1936.30px;top:318.00px;font-size:20px;line-height:20px;color:#8a8992;font-weight:400;letter-spacing:-0.350px">120.0</span><span class="t" style="left:1936.30px;top:375.00px;font-size:20px;line-height:20px;color:#8a8992;font-weight:400;letter-spacing:-0.350px">100.0</span><span class="t" style="left:1937.00px;top:433.00px;font-size:20px;line-height:20px;color:#8a8992;font-weight:400;letter-spacing:-0.350px">80.0</span><span class="t" style="left:1936.80px;top:490.00px;font-size:20px;line-height:20px;color:#8a8992;font-weight:400;letter-spacing:-0.350px">60.0</span><span class="t" style="left:1937.40px;top:547.00px;font-size:20px;line-height:20px;color:#8a8992;font-weight:400;letter-spacing:-0.350px">40.0</span><span class="t" style="left:1936.80px;top:605.00px;font-size:20px;line-height:20px;color:#8a8992;font-weight:400;letter-spacing:-0.350px">20.0</span><span class="t" style="left:1937.10px;top:662.00px;font-size:20px;line-height:20px;color:#8a8992;font-weight:400;letter-spacing:-0.350px">0.0</span><span class="t" style="left:195.04px;top:694.00px;font-size:20px;line-height:20px;color:#8a8992;font-weight:400;letter-spacing:-0.200px">Jan</span><span class="t" style="left:309.98px;top:694.00px;font-size:20px;line-height:20px;color:#8a8992;font-weight:400;letter-spacing:-0.200px">Feb</span><span class="t" style="left:426.61px;top:694.00px;font-size:20px;line-height:20px;color:#8a8992;font-weight:400;letter-spacing:-0.200px">Mar</span><span class="t" style="left:545.97px;top:694.00px;font-size:20px;line-height:20px;color:#8a8992;font-weight:400;letter-spacing:-0.200px">Apr</span><span class="t" style="left:658.61px;top:694.00px;font-size:20px;line-height:20px;color:#8a8992;font-weight:400;letter-spacing:-0.200px">May</span><span class="t" style="left:779.54px;top:694.00px;font-size:20px;line-height:20px;color:#8a8992;font-weight:400;letter-spacing:-0.200px">Jun</span><span class="t" style="left:899.79px;top:694.00px;font-size:20px;line-height:20px;color:#8a8992;font-weight:400;letter-spacing:-0.200px">Jul</span><span class="t" style="left:1115.44px;top:694.00px;font-size:20px;line-height:20px;color:#8a8992;font-weight:400;letter-spacing:-0.200px">Jan</span><span class="t" style="left:1230.38px;top:694.00px;font-size:20px;line-height:20px;color:#8a8992;font-weight:400;letter-spacing:-0.200px">Feb</span><span class="t" style="left:1347.01px;top:694.00px;font-size:20px;line-height:20px;color:#8a8992;font-weight:400;letter-spacing:-0.200px">Mar</span><span class="t" style="left:1466.37px;top:694.00px;font-size:20px;line-height:20px;color:#8a8992;font-weight:400;letter-spacing:-0.200px">Apr</span><span class="t" style="left:1579.01px;top:694.00px;font-size:20px;line-height:20px;color:#8a8992;font-weight:400;letter-spacing:-0.200px">May</span><span class="t" style="left:1699.94px;top:694.00px;font-size:20px;line-height:20px;color:#8a8992;font-weight:400;letter-spacing:-0.200px">Jun</span><span class="t" style="left:1820.19px;top:694.00px;font-size:20px;line-height:20px;color:#8a8992;font-weight:400;letter-spacing:-0.200px">Jul</span><span class="t" style="left:2035.84px;top:694.00px;font-size:20px;line-height:20px;color:#8a8992;font-weight:400;letter-spacing:-0.200px">Jan</span><span class="t" style="left:2150.78px;top:694.00px;font-size:20px;line-height:20px;color:#8a8992;font-weight:400;letter-spacing:-0.200px">Feb</span><span class="t" style="left:2267.41px;top:694.00px;font-size:20px;line-height:20px;color:#8a8992;font-weight:400;letter-spacing:-0.200px">Mar</span><span class="t" style="left:2386.77px;top:694.00px;font-size:20px;line-height:20px;color:#8a8992;font-weight:400;letter-spacing:-0.200px">Apr</span><span class="t" style="left:2499.41px;top:694.00px;font-size:20px;line-height:20px;color:#8a8992;font-weight:400;letter-spacing:-0.200px">May</span><span class="t" style="left:2620.34px;top:694.00px;font-size:20px;line-height:20px;color:#8a8992;font-weight:400;letter-spacing:-0.200px">Jun</span><span class="t" style="left:2740.59px;top:694.00px;font-size:20px;line-height:20px;color:#8a8992;font-weight:400;letter-spacing:-0.200px">Jul</span><span class="t" style="left:1015.90px;top:1474.00px;font-size:20px;line-height:20px;color:#8a8992;font-weight:400;letter-spacing:-0.350px">120.0</span><span class="t" style="left:1015.90px;top:1532.00px;font-size:20px;line-height:20px;color:#8a8992;font-weight:400;letter-spacing:-0.350px">100.0</span><span class="t" style="left:1016.60px;top:1589.00px;font-size:20px;line-height:20px;color:#8a8992;font-weight:400;letter-spacing:-0.350px">80.0</span><span class="t" style="left:1016.40px;top:1647.00px;font-size:20px;line-height:20px;color:#8a8992;font-weight:400;letter-spacing:-0.350px">60.0</span><span class="t" style="left:1017.00px;top:1704.00px;font-size:20px;line-height:20px;color:#8a8992;font-weight:400;letter-spacing:-0.350px">40.0</span><span class="t" style="left:1016.40px;top:1761.00px;font-size:20px;line-height:20px;color:#8a8992;font-weight:400;letter-spacing:-0.350px">20.0</span><span class="t" style="left:1016.70px;top:1819.00px;font-size:20px;line-height:20px;color:#8a8992;font-weight:400;letter-spacing:-0.350px">0.0</span><span class="t" style="left:1936.30px;top:1474.00px;font-size:20px;line-height:20px;color:#8a8992;font-weight:400;letter-spacing:-0.350px">120.0</span><span class="t" style="left:1936.30px;top:1532.00px;font-size:20px;line-height:20px;color:#8a8992;font-weight:400;letter-spacing:-0.350px">100.0</span><span class="t" style="left:1937.00px;top:1589.00px;font-size:20px;line-height:20px;color:#8a8992;font-weight:400;letter-spacing:-0.350px">80.0</span><span class="t" style="left:1936.80px;top:1647.00px;font-size:20px;line-height:20px;color:#8a8992;font-weight:400;letter-spacing:-0.350px">60.0</span><span class="t" style="left:1937.40px;top:1704.00px;font-size:20px;line-height:20px;color:#8a8992;font-weight:400;letter-spacing:-0.350px">40.0</span><span class="t" style="left:1936.80px;top:1761.00px;font-size:20px;line-height:20px;color:#8a8992;font-weight:400;letter-spacing:-0.350px">20.0</span><span class="t" style="left:1937.10px;top:1819.00px;font-size:20px;line-height:20px;color:#8a8992;font-weight:400;letter-spacing:-0.350px">0.0</span><span class="t" style="left:1115.44px;top:1850.00px;font-size:20px;line-height:20px;color:#8a8992;font-weight:400;letter-spacing:-0.200px">Jan</span><span class="t" style="left:1230.38px;top:1850.00px;font-size:20px;line-height:20px;color:#8a8992;font-weight:400;letter-spacing:-0.200px">Feb</span><span class="t" style="left:1347.01px;top:1850.00px;font-size:20px;line-height:20px;color:#8a8992;font-weight:400;letter-spacing:-0.200px">Mar</span><span class="t" style="left:1466.37px;top:1850.00px;font-size:20px;line-height:20px;color:#8a8992;font-weight:400;letter-spacing:-0.200px">Apr</span><span class="t" style="left:1579.01px;top:1850.00px;font-size:20px;line-height:20px;color:#8a8992;font-weight:400;letter-spacing:-0.200px">May</span><span class="t" style="left:1699.94px;top:1850.00px;font-size:20px;line-height:20px;color:#8a8992;font-weight:400;letter-spacing:-0.200px">Jun</span><span class="t" style="left:1820.19px;top:1850.00px;font-size:20px;line-height:20px;color:#8a8992;font-weight:400;letter-spacing:-0.200px">Jul</span><span class="t" style="left:2035.84px;top:1850.00px;font-size:20px;line-height:20px;color:#8a8992;font-weight:400;letter-spacing:-0.200px">Jan</span><span class="t" style="left:2150.78px;top:1850.00px;font-size:20px;line-height:20px;color:#8a8992;font-weight:400;letter-spacing:-0.200px">Feb</span><span class="t" style="left:2267.41px;top:1850.00px;font-size:20px;line-height:20px;color:#8a8992;font-weight:400;letter-spacing:-0.200px">Mar</span><span class="t" style="left:2386.77px;top:1850.00px;font-size:20px;line-height:20px;color:#8a8992;font-weight:400;letter-spacing:-0.200px">Apr</span><span class="t" style="left:2499.41px;top:1850.00px;font-size:20px;line-height:20px;color:#8a8992;font-weight:400;letter-spacing:-0.200px">May</span><span class="t" style="left:2620.34px;top:1850.00px;font-size:20px;line-height:20px;color:#8a8992;font-weight:400;letter-spacing:-0.200px">Jun</span><span class="t" style="left:2740.59px;top:1850.00px;font-size:20px;line-height:20px;color:#8a8992;font-weight:400;letter-spacing:-0.200px">Jul</span><span class="t" style="left:491.10px;top:987.00px;font-size:26px;line-height:26px;color:#5a5962;font-weight:400;letter-spacing:0.431px">Average</span><span class="t" style="left:194.96px;top:1039.00px;font-size:63px;line-height:63px;color:#57565e;font-weight:700;letter-spacing:-1.116px">12,001.12 Logs/Minute</span><span class="t" style="left:393.87px;top:1136.00px;font-size:26px;line-height:26px;color:#5a5962;font-weight:400;letter-spacing:0.888px">Logs</span><span class="t" style="left:490.37px;top:1136.00px;font-size:26px;line-height:26px;color:#5a5962;font-weight:400;letter-spacing:0.545px">Public Graph</span><span class="t" style="left:1033.30px;top:863.00px;font-size:25px;line-height:25px;color:#8a8991;font-weight:400;letter-spacing:0.764px">Content</span><span class="t" style="left:1244.80px;top:863.00px;font-size:25px;line-height:25px;color:#8a8991;font-weight:400;letter-spacing:0.690px">Service</span><span class="t" style="left:1455.60px;top:863.00px;font-size:25px;line-height:25px;color:#8a8991;font-weight:400;letter-spacing:0.236px">Resource name</span><span class="t" style="left:1668.90px;top:863.00px;font-size:25px;line-height:25px;color:#8a8991;font-weight:400;letter-spacing:-0.146px">Span ID</span><span class="t" style="left:2292.80px;top:1059.00px;font-size:25px;line-height:25px;color:#6f6e77;font-weight:400;letter-spacing:0.645px">No data found</span><span class="t" style="left:488.87px;top:1636.00px;font-size:26px;line-height:26px;color:#6f6e77;font-weight:400;letter-spacing:1.126px">Loading</span>
</div>
<div style="position:absolute;left:1019.4px;top:849.2px;width:842.3px;height:442.7px;overflow:hidden;border-radius:0 0 10px 10px;will-change:transform">
<svg width="2905" height="1813" viewBox="0 0 2905 1813" style="position:absolute;left:-1019.4px;top:-849.2px"><rect x="1034.2" y="914.20" width="39.3" height="36.9" rx="8.5" fill="none" stroke="#e0dfe3" stroke-width="2"/><path d="M1045,926.20 H1063 M1045,932.70 H1063 M1045,939.20 H1055" stroke="#6f6e77" stroke-width="2.2" stroke-linecap="round"/><rect x="1034.2" y="972.30" width="39.3" height="36.9" rx="8.5" fill="none" stroke="#e0dfe3" stroke-width="2"/><path d="M1045,984.30 H1063 M1045,990.80 H1063 M1045,997.30 H1055" stroke="#6f6e77" stroke-width="2.2" stroke-linecap="round"/><rect x="1034.2" y="1030.40" width="39.3" height="36.9" rx="8.5" fill="none" stroke="#e0dfe3" stroke-width="2"/><path d="M1045,1042.40 H1063 M1045,1048.90 H1063 M1045,1055.40 H1055" stroke="#6f6e77" stroke-width="2.2" stroke-linecap="round"/><rect x="1034.2" y="1088.50" width="39.3" height="36.9" rx="8.5" fill="none" stroke="#e0dfe3" stroke-width="2"/><path d="M1045,1100.50 H1063 M1045,1107.00 H1063 M1045,1113.50 H1055" stroke="#6f6e77" stroke-width="2.2" stroke-linecap="round"/><rect x="1034.2" y="1146.60" width="39.3" height="36.9" rx="8.5" fill="none" stroke="#e0dfe3" stroke-width="2"/><path d="M1045,1158.60 H1063 M1045,1165.10 H1063 M1045,1171.60 H1055" stroke="#6f6e77" stroke-width="2.2" stroke-linecap="round"/><rect x="1034.2" y="1204.70" width="39.3" height="36.9" rx="8.5" fill="none" stroke="#e0dfe3" stroke-width="2"/><path d="M1045,1216.70 H1063 M1045,1223.20 H1063 M1045,1229.70 H1055" stroke="#6f6e77" stroke-width="2.2" stroke-linecap="round"/><rect x="1034.2" y="1262.80" width="39.3" height="36.9" rx="8.5" fill="none" stroke="#e0dfe3" stroke-width="2"/><path d="M1045,1274.80 H1063 M1045,1281.30 H1063 M1045,1287.80 H1055" stroke="#6f6e77" stroke-width="2.2" stroke-linecap="round"/></svg>
<div style="position:absolute;left:-1019.4px;top:-849.2px;width:2905px;height:1813px"><span class="t" style="left:1086.89px;top:920.00px;font-size:26px;line-height:26px;color:#1a1523;font-weight:400;letter-spacing:0.683px">graphql....</span><span class="t" style="left:1243.88px;top:920.00px;font-size:26px;line-height:26px;color:#56555d;font-weight:400;letter-spacing:1.354px">public-graph</span><span class="t" style="left:1458.01px;top:920.00px;font-size:26px;line-height:26px;color:#56555d;font-weight:400;letter-spacing:0.752px">worker.kafka...</span><span class="t" style="left:1669.19px;top:920.00px;font-size:26px;line-height:26px;color:#56555d;font-weight:400;letter-spacing:1.213px">33369c1380...</span><span class="t" style="left:1086.89px;top:978.00px;font-size:26px;line-height:26px;color:#1a1523;font-weight:400;letter-spacing:0.683px">graphql....</span><span class="t" style="left:1244.69px;top:978.00px;font-size:26px;line-height:26px;color:#c9c8cd;font-weight:400;letter-spacing:1.503px">empty</span><span class="t" style="left:1458.01px;top:978.00px;font-size:26px;line-height:26px;color:#56555d;font-weight:400;letter-spacing:0.752px">worker.kafka...</span><span class="t" style="left:1669.19px;top:978.00px;font-size:26px;line-height:26px;color:#56555d;font-weight:400;letter-spacing:1.213px">33369c1380...</span><span class="t" style="left:1086.89px;top:1036.00px;font-size:26px;line-height:26px;color:#1a1523;font-weight:400;letter-spacing:0.683px">graphql....</span><span class="t" style="left:1243.88px;top:1036.00px;font-size:26px;line-height:26px;color:#56555d;font-weight:400;letter-spacing:1.354px">public-graph</span><span class="t" style="left:1458.01px;top:1036.00px;font-size:26px;line-height:26px;color:#56555d;font-weight:400;letter-spacing:0.752px">worker.kafka...</span><span class="t" style="left:1669.19px;top:1036.00px;font-size:26px;line-height:26px;color:#56555d;font-weight:400;letter-spacing:1.213px">33369c1380...</span><span class="t" style="left:1086.89px;top:1094.00px;font-size:26px;line-height:26px;color:#1a1523;font-weight:400;letter-spacing:0.683px">graphql....</span><span class="t" style="left:1244.69px;top:1094.00px;font-size:26px;line-height:26px;color:#c9c8cd;font-weight:400;letter-spacing:1.503px">empty</span><span class="t" style="left:1458.01px;top:1094.00px;font-size:26px;line-height:26px;color:#56555d;font-weight:400;letter-spacing:0.752px">worker.kafka...</span><span class="t" style="left:1669.19px;top:1094.00px;font-size:26px;line-height:26px;color:#56555d;font-weight:400;letter-spacing:1.213px">33369c1380...</span><span class="t" style="left:1086.89px;top:1152.00px;font-size:26px;line-height:26px;color:#1a1523;font-weight:400;letter-spacing:0.683px">graphql....</span><span class="t" style="left:1243.88px;top:1152.00px;font-size:26px;line-height:26px;color:#56555d;font-weight:400;letter-spacing:1.354px">public-graph</span><span class="t" style="left:1458.01px;top:1152.00px;font-size:26px;line-height:26px;color:#56555d;font-weight:400;letter-spacing:0.752px">worker.kafka...</span><span class="t" style="left:1669.19px;top:1152.00px;font-size:26px;line-height:26px;color:#56555d;font-weight:400;letter-spacing:1.213px">33369c1380...</span><span class="t" style="left:1086.89px;top:1210.00px;font-size:26px;line-height:26px;color:#1a1523;font-weight:400;letter-spacing:0.683px">graphql....</span><span class="t" style="left:1244.69px;top:1210.00px;font-size:26px;line-height:26px;color:#c9c8cd;font-weight:400;letter-spacing:1.503px">empty</span><span class="t" style="left:1458.01px;top:1210.00px;font-size:26px;line-height:26px;color:#56555d;font-weight:400;letter-spacing:0.752px">worker.kafka...</span><span class="t" style="left:1669.19px;top:1210.00px;font-size:26px;line-height:26px;color:#56555d;font-weight:400;letter-spacing:1.213px">33369c1380...</span><span class="t" style="left:1086.89px;top:1268.00px;font-size:26px;line-height:26px;color:#1a1523;font-weight:400;letter-spacing:0.683px">graphql....</span><span class="t" style="left:1243.88px;top:1268.00px;font-size:26px;line-height:26px;color:#56555d;font-weight:400;letter-spacing:1.354px">public-graph</span><span class="t" style="left:1458.01px;top:1268.00px;font-size:26px;line-height:26px;color:#56555d;font-weight:400;letter-spacing:0.752px">worker.kafka...</span><span class="t" style="left:1669.19px;top:1268.00px;font-size:26px;line-height:26px;color:#56555d;font-weight:400;letter-spacing:1.213px">33369c1380...</span></div>
</div>
</body></html>
